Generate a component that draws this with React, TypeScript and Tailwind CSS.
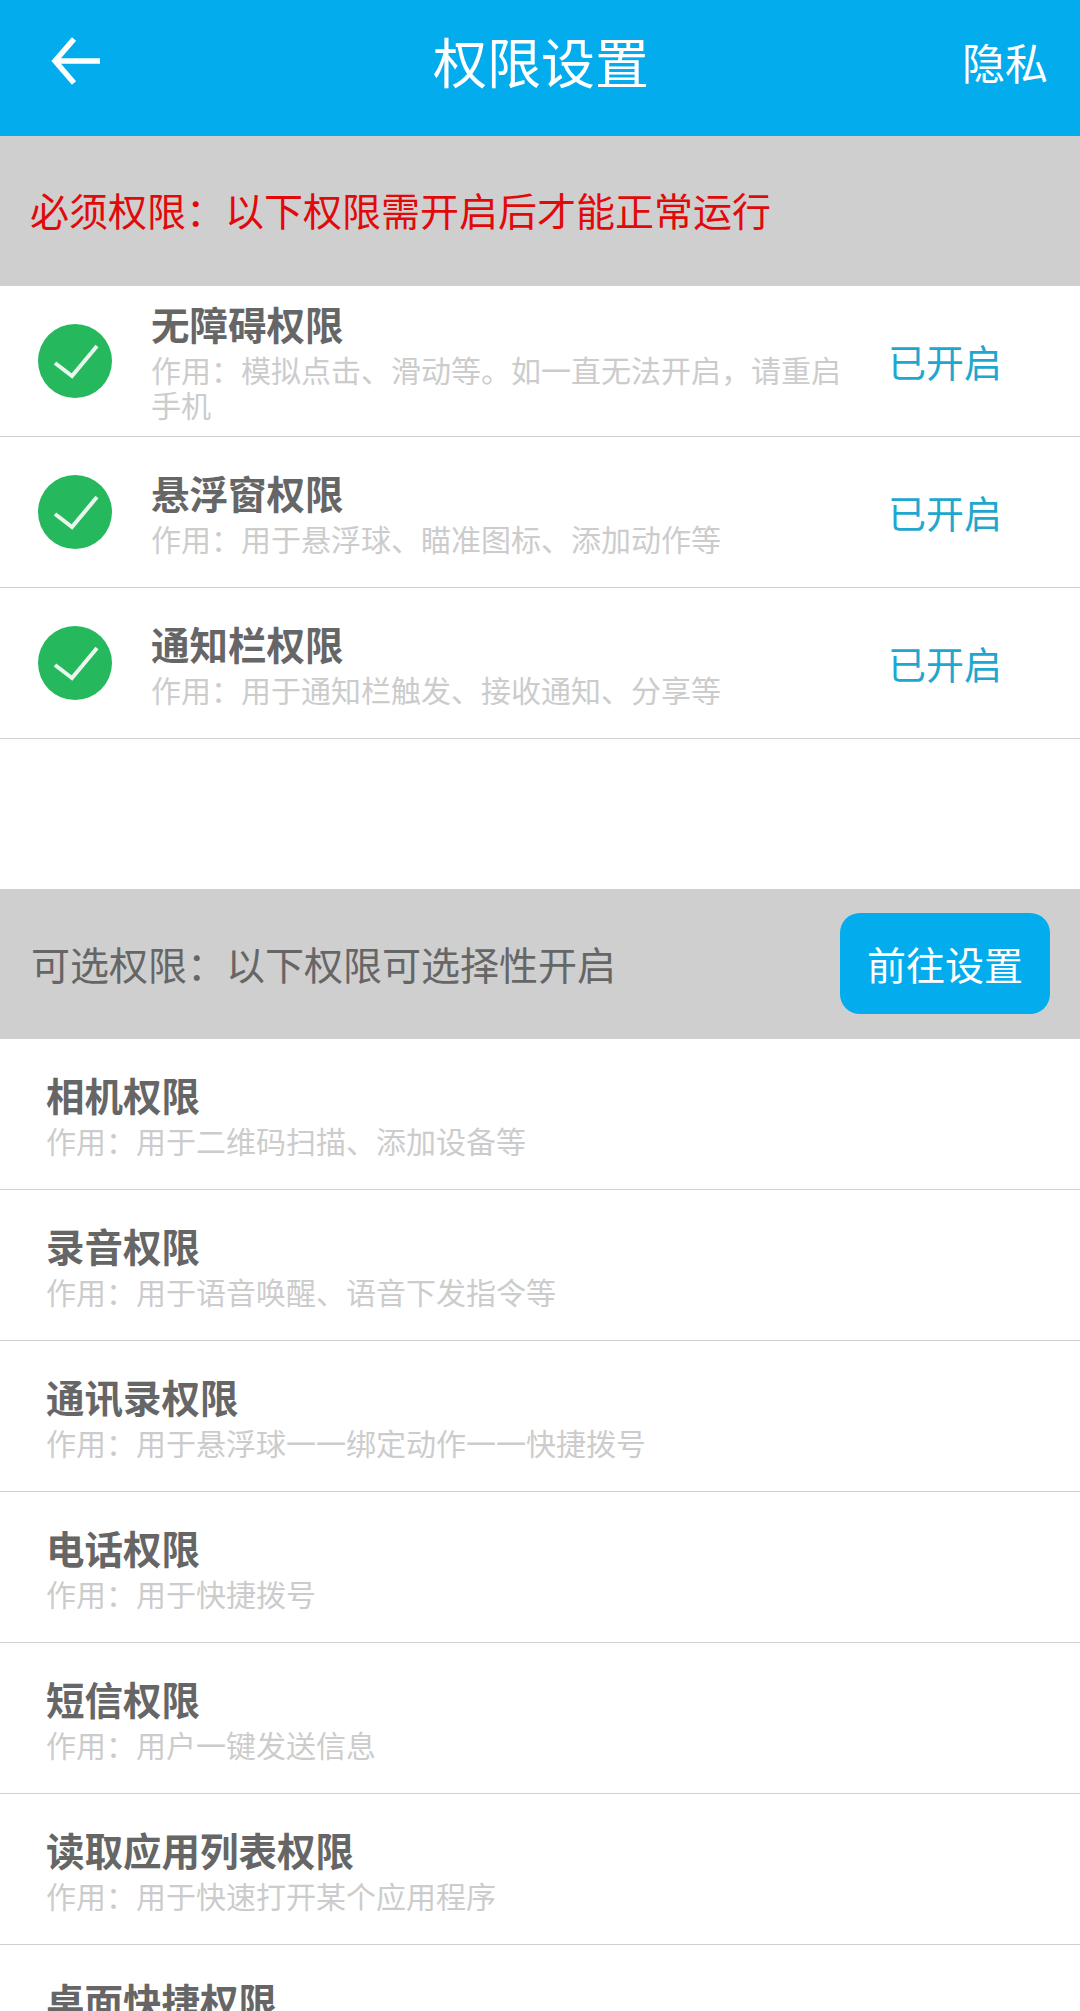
import React from 'react';

const cjk = "font-['Noto_Sans_CJK_SC','Noto_Sans',sans-serif]";

const required = [
  { title: '无障碍权限', desc: '作用：模拟点击、滑动等。如一直无法开启，请重启手机' },
  { title: '悬浮窗权限', desc: '作用：用于悬浮球、瞄准图标、添加动作等' },
  { title: '通知栏权限', desc: '作用：用于通知栏触发、接收通知、分享等' },
];

const optional = [
  { title: '相机权限', desc: '作用：用于二维码扫描、添加设备等' },
  { title: '录音权限', desc: '作用：用于语音唤醒、语音下发指令等' },
  { title: '通讯录权限', desc: '作用：用于悬浮球一一绑定动作一一快捷拨号' },
  { title: '电话权限', desc: '作用：用于快捷拨号' },
  { title: '短信权限', desc: '作用：用户一键发送信息' },
  { title: '读取应用列表权限', desc: '作用：用于快速打开某个应用程序' },
  { title: '桌面快捷权限', desc: '\u00a0' },
];

const CheckBadge = () => (
  <svg viewBox="0 0 74 74" className="w-[74px] h-[74px] shrink-0">
    <circle cx="37" cy="37" r="37" fill="#25b85c" />
    <path d="M17 39 L34 52 L59 22" fill="none" stroke="#e9f8ef" strokeWidth="4" />
  </svg>
);

const App: React.FC = () => {
  return (
    <div className={`w-[1080px] h-[2011px] overflow-hidden bg-white ${cjk}`}>
      {/* Header */}
      <header className="h-[136px] bg-[#03aced] flex items-start justify-between pl-[48px] pr-[32px] text-white">
        <svg viewBox="0 0 54 54" className="w-[54px] h-[54px] mt-[34px]" fill="none" stroke="white" strokeWidth="5.5">
          <path d="M26 5 L7 27 L26 49 M7 27 H52" />
        </svg>
        <h1 className="text-[54px] leading-[54px] mt-[34px] ml-[18px] font-normal">权限设置</h1>
        <button className="text-[43px] leading-[43px] mt-[40px]">隐私</button>
      </header>

      {/* Required */}
      <div className="h-[150px] bg-[#cfcfcf] flex items-center pl-[30px] pb-[4px] text-[39px] text-[#e00a0a]">
        必须权限：以下权限需开启后才能正常运行
      </div>
      {required.map((item) => (
        <div key={item.title} className="h-[151px] border-b border-[#d0d0d0] flex items-center pl-[38px] pr-[78px]">
          <CheckBadge />
          <div className="ml-[39px] w-[700px]">
            <div className="text-[38.5px] leading-[46px] font-bold text-[#666666]">{item.title}</div>
            <div className="text-[30px] leading-[35px] mt-[6px] text-[#cccccc]">{item.desc}</div>
          </div>
          <div className="ml-auto text-[38px] pb-[2px] text-[#1ea7cf]">已开启</div>
        </div>
      ))}

      <div className="h-[150px]" />

      {/* Optional */}
      <div className="h-[150px] bg-[#cfcfcf] flex items-center justify-between pl-[31px] pr-[30px]">
        <span className="text-[39px] pb-[2px] text-[#666666]">可选权限：以下权限可选择性开启</span>
        <button className="w-[210px] h-[101px] mb-[2px] rounded-[20px] bg-[#03aced] text-white text-[39px]">前往设置</button>
      </div>
      {optional.map((item) => (
        <div key={item.title} className="h-[151px] border-b border-[#d0d0d0] flex flex-col justify-center pl-[46px]">
          <div className="text-[38.5px] leading-[46px] font-bold text-[#666666]">{item.title}</div>
          <div className="text-[30px] leading-[35px] mt-[6px] text-[#cccccc]">{item.desc}</div>
        </div>
      ))}
    </div>
  );
};

export default App;
